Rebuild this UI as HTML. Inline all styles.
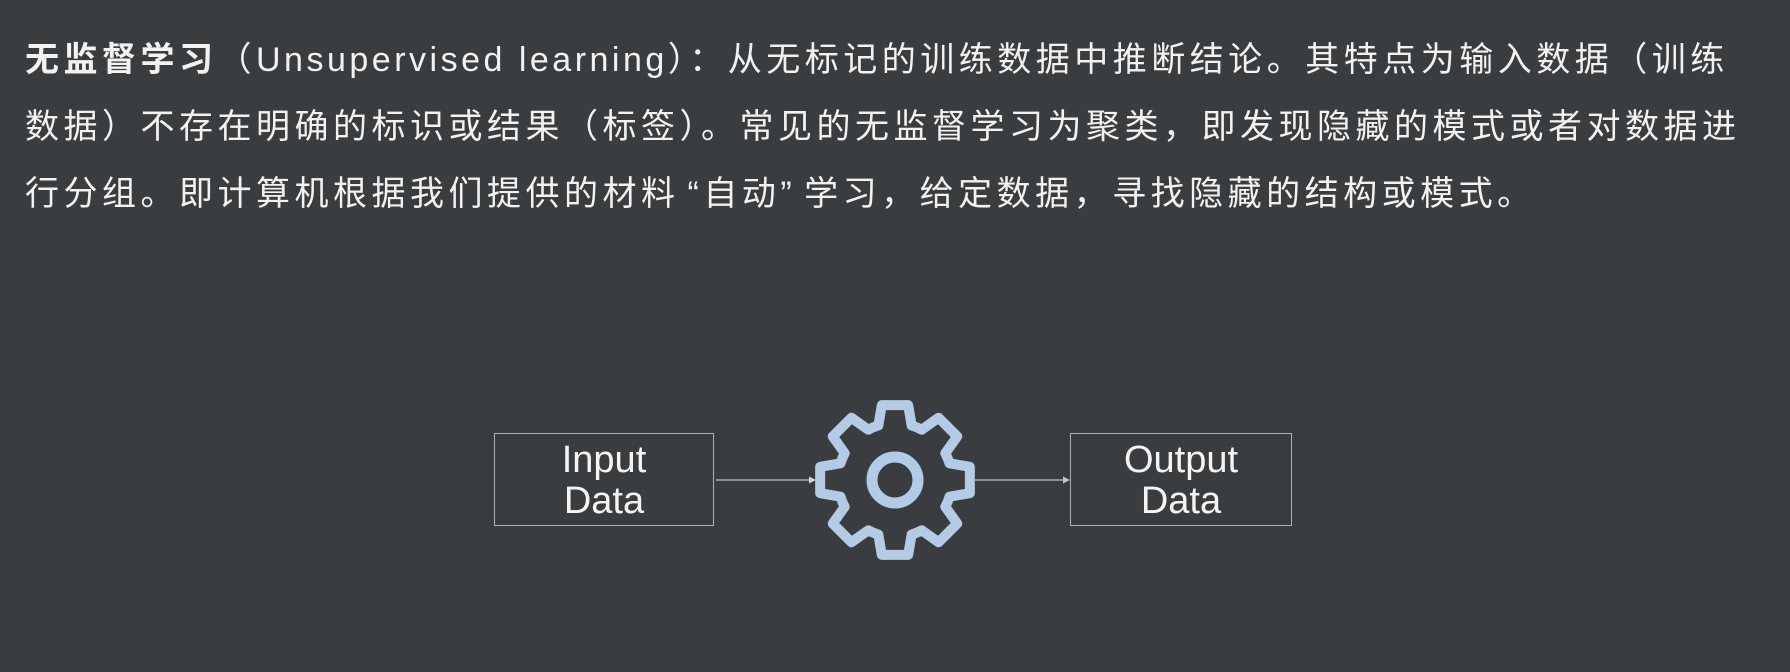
<!DOCTYPE html>
<html><head><meta charset="utf-8">
<style>
html,body{margin:0;padding:0;}
body{width:1790px;height:672px;background:#3a3d40;overflow:hidden;position:relative;
font-family:"Liberation Sans","Noto Sans CJK SC",sans-serif;color:#f2f2f2;}
.t{position:absolute;left:25px;top:27px;font-size:34px;line-height:67px;letter-spacing:4.5px;white-space:nowrap;
font-family:"Liberation Sans","Noto Sans CJK SC",sans-serif;}
.t b{font-weight:bold;}
.lat{letter-spacing:3.5px;font-size:34px;}
.q{margin:0 8px;}
.box{position:absolute;top:433px;width:220px;height:93px;border:1.5px solid #a9b2bc;box-sizing:border-box;
font-size:38px;line-height:41px;text-align:center;padding-top:6px;color:#f4f4f4;}
</style></head><body>
<div class="t">
<div><b>无监督学习</b>（<span class="lat">Unsupervised learning</span>）：从无标记的训练数据中推断结论。其特点为输入数据（训练</div>
<div>数据）不存在明确的标识或结果（标签）。常见的无监督学习为聚类，即发现隐藏的模式或者对数据进</div>
<div>行分组。即计算机根据我们提供的材料<span class="q">“自动”</span>学习，给定数据，寻找隐藏的结构或模式。</div>
</div>
<div class="box" style="left:494px">Input<br>Data</div>
<div class="box" style="left:1070px;width:222px">Output<br>Data</div>
<svg width="1790" height="672" style="position:absolute;left:0;top:0">
<line x1="716" y1="480" x2="810" y2="480" stroke="#a8aeb4" stroke-width="1.5"/>
<polygon points="816,480 809,476.5 809,483.5" fill="#d0d4d8"/>
<line x1="975" y1="480" x2="1064" y2="480" stroke="#a8aeb4" stroke-width="1.5"/>
<polygon points="1070,480 1063,476.5 1063,483.5" fill="#c0c6cc"/>
<g transform="translate(895,480)" stroke="#b3cbe5" stroke-width="10" stroke-linejoin="round" fill="#3a3d40">
<path d="M-16.67,-54.51 L-13.19,-74.84 L13.19,-74.84 L16.67,-54.51 A57 57 0 0 1 26.76,-50.33
L43.59,-62.26 L62.26,-43.59 L50.33,-26.76 A57 57 0 0 1 54.51,-16.67
L74.84,-13.19 L74.84,13.19 L54.51,16.67 A57 57 0 0 1 50.33,26.76
L62.26,43.59 L43.59,62.26 L26.76,50.33 A57 57 0 0 1 16.67,54.51
L13.19,74.84 L-13.19,74.84 L-16.67,54.51 A57 57 0 0 1 -26.76,50.33
L-43.59,62.26 L-62.26,43.59 L-50.33,26.76 A57 57 0 0 1 -54.51,16.67
L-74.84,13.19 L-74.84,-13.19 L-54.51,-16.67 A57 57 0 0 1 -50.33,-26.76
L-62.26,-43.59 L-43.59,-62.26 L-26.76,-50.33 A57 57 0 0 1 -16.67,-54.51 Z"/>
<circle r="23" fill="none" stroke-width="11"/>
</g>
</svg>
</body></html>
